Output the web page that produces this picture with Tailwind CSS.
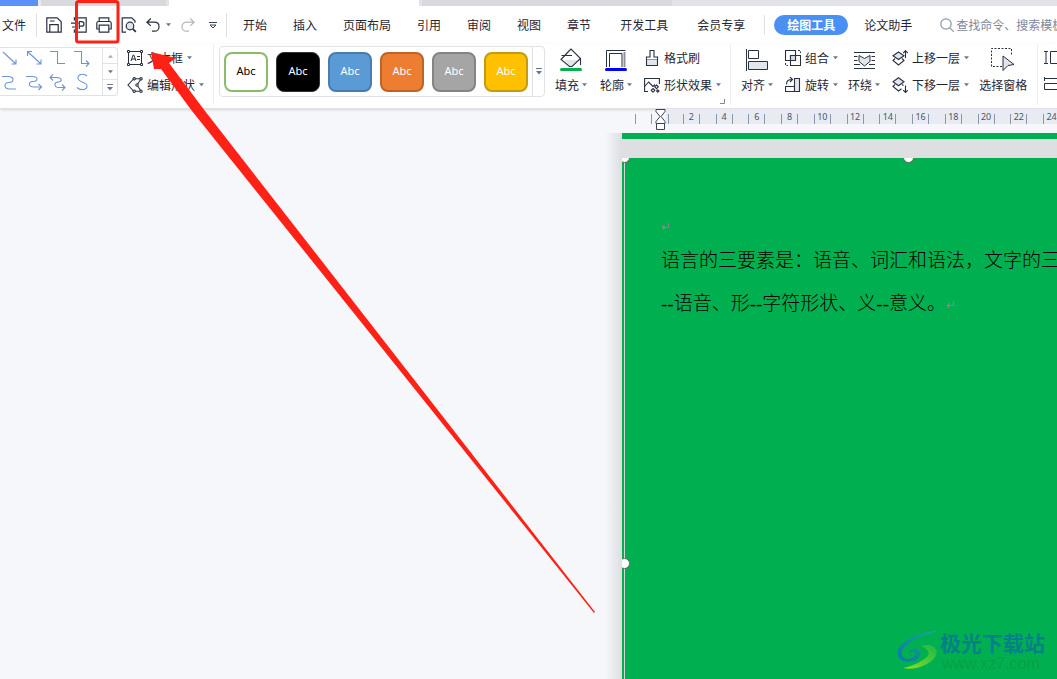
<!DOCTYPE html>
<html lang="zh-CN">
<head>
<meta charset="utf-8">
<title>绘图工具</title>
<script src="https://cdn.jsdelivr.net/npm/@tailwindcss/browser@4"></script>
</head>
<body class="relative flex h-screen flex-col overflow-hidden bg-[#f5f7fa] font-['Noto_Sans_CJK_SC',sans-serif] text-xs text-[#1f2633]">
<svg class="hidden">
  <symbol id="caret" viewBox="0 0 6 4"><path d="M0 0h6L3 3.5z" fill="#6b7890"/></symbol>
  <symbol id="more" viewBox="0 0 6 7"><path d="M0 .5h6" stroke="#6b7890"/><path d="M0 3h6L3 6.5z" fill="#6b7890"/></symbol>
</svg>

<!-- Document tabs -->
<div class="flex h-[6px] shrink-0 bg-white">
  <div class="w-[38px] bg-[#5b8ff9]"></div>
  <div class="w-[3px] bg-[#e8e9ec]"></div>
  <div class="w-[125px] bg-[#d8d9dd]"></div>
  <div class="w-[3px] bg-[#e2e3e7]"></div>
  <div class="w-[250px] bg-white"></div>
  <div class="w-[3px] bg-[#e2e3e7]"></div>
  <div class="w-[250px] bg-[#d8d9dd]"></div>
  <div class="flex-1 bg-[#e2e3e7]"></div>
</div>

<!-- Menu bar -->
<nav class="flex h-[38px] shrink-0 items-center overflow-hidden whitespace-nowrap bg-white">
  <button class="ml-[2px] shrink-0">文件</button>
  <span class="ml-[10px] h-6 w-px shrink-0 bg-[#dddfe4]"></span>
  <div class="ml-[9px] flex shrink-0 items-center gap-[9px]">
    <button aria-label="保存"><svg class="size-4" viewBox="0 0 16 16" fill="none" stroke="#283142" stroke-width="1.2"><path d="M.8 15.2V.8h10.4l4 4v10.4zM3.8 15V7.6h8.4V15M4 4h4.6"/></svg></button>
    <button aria-label="输出为PDF"><svg class="size-4" viewBox="0 0 16 16" fill="none" stroke="#283142" stroke-width="1.2"><path d="M3.4 3.4V.8h11.8v14.4H3.4v-2.600M0 6.200h6.600M4.400 3.900l2.400 2.300-2.400 2.300M1 10h5.200M8.300 12V4.600h2.200c3.300 0 3.300 4.600 0 4.600H8.300"/></svg></button>
    <button aria-label="打印"><svg class="size-4" viewBox="0 0 16 16" fill="none" stroke="#283142" stroke-width="1.2"><path d="M3.200 4.500V.8h9.600v3.700M3.200 12H.8V6.200q0-1.700 1.700-1.700h11q1.700 0 1.700 1.700V12h-2.400M3.200 8.200h9.600v7H3.200z"/></svg></button>
    <button aria-label="打印预览"><svg class="size-4" viewBox="0 0 16 16" fill="none" stroke="#283142" stroke-width="1.2"><path d="M5 15.200H1.200V.8h9.600l3.200 3.300v1.700"/><circle cx="9" cy="9" r="3.800" fill="#e2e5ea"/><path d="M11.800 11.800l3 3" stroke-width="1.800"/></svg></button>
  </div>
  <button aria-label="撤销" class="ml-[9px] shrink-0"><svg class="h-4 w-[14px]" viewBox="0 0 14 16" fill="none" stroke="#283142" stroke-width="1.200"><path d="M4.800 1.500L.9 5.200l3.900 3.700M1.200 5.200h7.300c6 0 6 9 0 9H6"/></svg></button>
  <svg class="ml-[6px] h-1 w-[5px] shrink-0"><use href="#caret"/></svg>
  <button aria-label="恢复" class="ml-[10px] shrink-0"><svg class="h-4 w-[14px]" viewBox="0 0 14 16" fill="none" stroke="#b3b7bf" stroke-width="1.200"><path d="M9.200 1.500l3.900 3.700-3.900 3.700M12.800 5.200H5.500c-6 0-6 9 0 9H8"/></svg></button>
  <button aria-label="自定义快速访问工具栏" class="ml-[14px] shrink-0"><svg class="h-[7px] w-[8px]" viewBox="0 0 8 7" fill="none" stroke="#3b4454"><path d="M0 .5h8M1 3h6L4 6z"/></svg></button>
  <span class="ml-[9px] h-6 w-px shrink-0 bg-[#dddfe4]"></span>
  <div class="ml-4 flex shrink-0 gap-[26px]">
    <button>开始</button><button>插入</button><button>页面布局</button><button>引用</button><button>审阅</button><button>视图</button><button>章节</button>
  </div>
  <div class="ml-[29px] flex shrink-0 gap-[29px]"><button>开发工具</button><button>会员专享</button></div>
  <span class="ml-[19px] h-5 w-px shrink-0 bg-[#dddfe4]"></span>
  <button class="ml-[9px] h-5 shrink-0 rounded-full bg-[#4a90f2] px-[13px] font-bold text-white">绘图工具</button>
  <button class="ml-4 shrink-0">论文助手</button>
  <label class="ml-[28px] flex min-w-0 flex-1 items-center gap-[2px]">
    <svg class="size-[14px] shrink-0" viewBox="0 0 14 14" fill="none" stroke="#8a96aa" stroke-width="1.200"><circle cx="6" cy="6" r="5.200"/><path d="M9.800 9.800l4 4"/></svg>
    <input aria-label="搜索" class="w-full min-w-0 outline-none placeholder:text-[#7d889c] placeholder:opacity-100" placeholder="查找命令、搜索模板">
  </label>
</nav>

<!-- Ribbon -->
<section class="flex h-[65px] shrink-0 overflow-hidden whitespace-nowrap border-b border-[#dfe1e5] bg-white shadow-sm">
  <div class="mt-[3px] flex h-[49px] w-[118px] shrink-0 rounded-r-sm border-y border-r border-[#e0e2e7]">
    <svg class="h-[47px] w-[102px]" viewBox="0 0 102 47" fill="none" stroke="#6f93d6" stroke-width="1.100">
      <path d="M3 4l13 12M16 11.500V16h-4.500M28 4l13 12M41 11.500V16h-4.500M27.500 8V3.500H32M50 3.500h7.500v12H65M74 3.500h7.500v12h7.500M86 12.500l3 3-3 3"/>
      <path d="M2 28.500h6c7 0 6 6 1 6s-6 6.500 1 6.500h6M26 28.500h6c7 0 6 5 1 5s-5 5.500 1 5.500h7M38.500 36l3 3-3 3M50.500 29.500h6c6 0 6 4.500 1.500 4.500s-4 5.500 1 5.500h6M53 26.500l-3 3 3 3M62 36.500l3 3-3 3M87 28c-3-3-10-2-9 2.500s9 3 9 7.500-7 4.500-10 1.500"/>
    </svg>
    <div class="flex flex-1 flex-col border-l border-[#e0e2e7]">
      <button aria-label="上一行" class="flex flex-1 items-center justify-center"><svg class="h-1 w-[5px] rotate-180 opacity-60"><use href="#caret"/></svg></button>
      <button aria-label="下一行" class="flex flex-1 items-center justify-center border-y border-[#e0e2e7]"><svg class="h-1 w-[5px]"><use href="#caret"/></svg></button>
      <button aria-label="更多线条" class="flex flex-1 items-center justify-center"><svg class="h-[7px] w-[6px]"><use href="#more"/></svg></button>
    </div>
  </div>
  <div class="ml-[9px] flex shrink-0 flex-col items-start">
    <button class="flex h-[27px] items-center"><svg class="mr-1 size-4" viewBox="0 0 16 16" fill="none" stroke="#283142"><path d="M1.500 1.500h13v13h-13zM4 11l2.200-6h.6L9 11M4.800 9h3.400M10 6.500h3M10 9.500h3"/><path d="M.5.500h2v2h-2zM13.500.500h2v2h-2zM.5 13.500h2v2h-2zM13.500 13.500h2v2h-2z" fill="#fff"/></svg>文本框<svg class="ml-[4px] h-1 w-[5px]"><use href="#caret"/></svg></button>
    <button class="flex h-[27px] items-center"><svg class="mr-1 size-4" viewBox="0 0 16 16" fill="none" stroke="#283142" stroke-width="1.100"><path d="M6.500 2L1 8l5.500 6M7 1.800L14 1.800M14 2l-4 6 4 6M14 14.200H7"/><circle cx="7.200" cy="1.800" r="1.200" fill="#fff"/><circle cx="14" cy="1.800" r="1.200" fill="#fff"/><circle cx="10" cy="8" r="1.200" fill="#fff"/><circle cx="14" cy="14.200" r="1.200" fill="#fff"/><circle cx="7.200" cy="14.200" r="1.200" fill="#fff"/></svg>编辑形状<svg class="ml-[4px] h-1 w-[5px]"><use href="#caret"/></svg></button>
  </div>
  <span class="ml-[9px] h-[61px] w-px shrink-0 bg-[#eceef1]"></span>
  <div class="ml-[5px] mt-[2px] flex h-[51px] shrink-0 items-center rounded-sm border border-[#e0e2e7] font-['Noto_Sans',sans-serif] text-[11px] text-white">
    <div class="flex gap-2 px-1">
      <button class="h-10 w-11 rounded-lg border-2 border-[#8abb6b] bg-white text-black">Abc</button>
      <button class="h-10 w-11 rounded-lg border border-[#333] bg-black">Abc</button>
      <button class="h-10 w-11 rounded-lg border-2 border-[#4a7cae] bg-[#5b9bd5]">Abc</button>
      <button class="h-10 w-11 rounded-lg border-2 border-[#bd6427] bg-[#ed7d31]">Abc</button>
      <button class="h-10 w-11 rounded-lg border-2 border-[#848484] bg-[#a5a5a5]">Abc</button>
      <button class="h-10 w-11 rounded-lg border-2 border-[#c29a14] bg-[#ffc000]">Abc</button>
    </div>
    <button aria-label="更多样式" class="flex h-full w-3 items-center justify-center border-l border-[#e0e2e7]"><svg class="h-[7px] w-[6px]"><use href="#more"/></svg></button>
  </div>
  <button class="ml-[10px] flex shrink-0 flex-col items-center">
    <span class="flex h-[27px] items-end"><svg class="h-[23px] w-[22px]" viewBox="0 0 22 23" fill="none" stroke="#283142" stroke-width="1.100"><path d="M4 12h14l-7 7z" fill="#e2e5ea" stroke="none"/><path d="M9 3l2-2 9.500 9.500L12 18.500H9.500L1 11.500 9 3M1.500 7.500H12M20.500 10v7"/><path d="M1.500 21.500h19" stroke="#00b050" stroke-width="3" stroke-linecap="round"/></svg></span>
    <span class="flex h-[27px] items-center">填充<svg class="ml-[3px] h-1 w-[5px]"><use href="#caret"/></svg></span>
  </button>
  <button class="ml-[13px] flex shrink-0 flex-col items-center">
    <span class="flex h-[27px] items-end"><svg class="h-[23px] w-[22px]" viewBox="0 0 22 23" fill="none" stroke="#283142"><path d="M1.500 19V2.500h19M4.500 19V5.500H17V19"/><path d="M19.500 4v15" stroke="#8d939e" stroke-width="2"/><path d="M1.500 21.500h19" stroke="#00f" stroke-width="3" stroke-linecap="round"/></svg></span>
    <span class="flex h-[27px] items-center">轮廓<svg class="ml-[3px] h-1 w-[5px]"><use href="#caret"/></svg></span>
  </button>
  <div class="ml-[12px] flex shrink-0 flex-col items-start">
    <button class="flex h-[27px] items-center"><svg class="mr-1 size-4" viewBox="0 0 16 16" fill="none" stroke="#283142" stroke-width="1.100"><path d="M2.500 9.500h11v6h-11z" fill="#e2e5ea"/><path d="M2.500 9.500V7H6V.5h4V7h3.500v2.500" fill="#fff"/></svg>格式刷</button>
    <button class="flex h-[27px] items-center"><svg class="mr-1 size-4" viewBox="0 0 16 16" fill="none" stroke="#283142" stroke-width="1.100"><path d="M4 14.500H.6V1.500h14.800V7M.6 9.500l4-4.500L9 9.500l2-2"/><path d="M12.500 8l1.800 1.800-1.800 1.800-1.800-1.800zM9 11.500l1.800 1.800L9 15.100l-1.800-1.800zM13.800 12.800l1.200 1.200-1.200 1.200-1.200-1.200z" fill="#fff"/></svg>形状效果<svg class="ml-[4px] h-1 w-[5px]"><use href="#caret"/></svg></button>
  </div>
  <button aria-label="形状样式设置" class="ml-[-1px] mb-1 shrink-0 self-end"><svg class="size-[5px]" viewBox="0 0 5 5" fill="none" stroke="#7d889c"><path d="M4.500 0v4.500H0"/></svg></button>
  <span class="ml-[5px] h-[61px] w-px shrink-0 bg-[#eceef1]"></span>
  <button class="ml-[10px] flex shrink-0 flex-col items-center">
    <span class="flex h-[27px] items-end"><svg class="h-[22px] w-[22px]" viewBox="0 0 22 22" fill="none" stroke="#283142"><path d="M.5 0v22M2.500 1.500h10v8h-10z"/><path d="M2.500 12.500h19v8h-19z" fill="#e2e5ea"/></svg></span>
    <span class="flex h-[27px] items-center">对齐<svg class="ml-[3px] h-1 w-[5px]"><use href="#caret"/></svg></span>
  </button>
  <div class="ml-[12px] flex shrink-0 flex-col items-start">
    <button class="flex h-[27px] items-center"><svg class="mr-1 size-4" viewBox="0 0 16 16" fill="none" stroke="#283142" stroke-width="1.100"><path d="M5.500 5.500h10v10h-10z"/><path d="M.5.500h10v10H.5z"/><path d="M5.500 5.500h5v5h-5z" fill="#d5d9e0"/><path d="M13 .5h2.500V3M.5 13v2.500H3" stroke-dasharray="2 1.500"/></svg>组合<svg class="ml-[4px] h-1 w-[5px]"><use href="#caret"/></svg></button>
    <button class="flex h-[27px] items-center"><svg class="mr-1 size-4" viewBox="0 0 16 16" fill="none" stroke="#283142" stroke-width="1.100"><path d="M.5 9.500h9v5h-9z"/><path d="M9.500 1.500h5v13h-5z" fill="#e2e5ea"/><path d="M1.500 7.500c0-4 2-5 6-5M5 0l2.500 2.500L5 5"/></svg>旋转<svg class="ml-[4px] h-1 w-[5px]"><use href="#caret"/></svg></button>
  </div>
  <button class="ml-[10px] flex shrink-0 flex-col items-center">
    <span class="flex h-[27px] items-end"><svg class="h-[20px] w-[22px]" viewBox="0 0 22 20" fill="none" stroke="#283142"><path d="M1 1.500h21M1 5.500h3.500M18.500 5.500H22M1 9.500h3.500M18.500 9.500H22M1 13.500h6M16 13.500h6M1 17.500h21"/><path d="M6 4.500l5.500 3 5.500-3v6l-5.500 4.500L6 10.500z" fill="#e2e5ea"/></svg></span>
    <span class="flex h-[27px] items-center">环绕<svg class="ml-[3px] h-1 w-[5px]"><use href="#caret"/></svg></span>
  </button>
  <div class="ml-[12px] flex shrink-0 flex-col items-start">
    <button class="flex h-[27px] items-center"><svg class="mr-1 size-4" viewBox="0 0 16 16" fill="none" stroke="#283142" stroke-width="1.100"><path d="M6.500 2L12 5.700 6.500 9.500 1 5.700z" fill="#e2e5ea"/><path d="M3 8.500l-2 2L6.500 15l5.500-4.500-2-2M13.500 8V1M11.200 3l2.300-2.300L15.800 3"/></svg>上移一层<svg class="ml-[4px] h-1 w-[5px]"><use href="#caret"/></svg></button>
    <button class="flex h-[27px] items-center"><svg class="mr-1 size-4" viewBox="0 0 16 16" fill="none" stroke="#283142" stroke-width="1.100"><path d="M6.500.7L12 4.700 6.500 8.700 1 4.700z" fill="#e2e5ea"/><path d="M3 7.500l-2 2L6.500 14l3-2.200M10 7.500l1.500 1M13.500 8.500v7M11.200 13.200l2.300 2.300 2.300-2.300"/></svg>下移一层<svg class="ml-[4px] h-1 w-[5px]"><use href="#caret"/></svg></button>
  </div>
  <button class="ml-[10px] flex shrink-0 flex-col items-center">
    <span class="flex h-[27px] items-end"><svg class="h-[23px] w-[24px]" viewBox="0 0 24 23" fill="none" stroke="#283142"><path d="M11 18.500H.5V.5h20V8" stroke-dasharray="2 1.500"/><path d="M12 8l11 8.500-6 1-5 5z" fill="#e2e5ea"/></svg></span>
    <span class="flex h-[27px] items-center">选择窗格</span>
  </button>
  <span class="ml-[10px] h-[61px] w-px shrink-0 bg-[#eceef1]"></span>
  <div class="ml-[6px] flex shrink-0 flex-col">
    <span class="flex h-[27px] items-center"><svg class="size-4" viewBox="0 0 16 16" fill="none" stroke="#283142"><path d="M0 1.500h4M2 1.500v12M0 13.500h4M6.500 1.500h9v12h-9z"/></svg></span>
    <span class="flex h-[27px] items-center"><svg class="size-4" viewBox="0 0 16 16" fill="none" stroke="#283142"><path d="M.5 0v4M.5 1.500h15M.5 6.500h15v6H.5z"/></svg></span>
  </div>
</section>

<!-- Horizontal ruler -->
<div class="flex h-6 shrink-0 items-start overflow-hidden">
  <div class="ml-[635px] mt-[5px] h-[10px] w-[17px] shrink-0 border-x border-[#8a96aa]"></div>
  <svg class="ml-[3px] h-[22px] w-[11px] shrink-0" viewBox="0 0 11 22" fill="#fff" stroke="#3b4454"><path d="M1 .5h9v2L6 7.500l4 5v2H1v-2l4-5-4-5z"/><path d="M1.500 14.500h8v6h-8z"/></svg>
  <div class="flex h-[15px] flex-1 bg-[#e8ebf1] pl-[2px] pt-[5px]">
    <div class="h-[10px] w-[7px] shrink-0 border-l border-[#8a96aa]"></div>
    <div class="grid w-[393px] shrink-0 grid-cols-12 justify-items-center font-['Noto_Sans',sans-serif] text-[9px] leading-[5px] text-[#4a5568]">
      <span class="flex h-[10px] w-[17px] justify-center border-x border-[#8a96aa]">2</span>
      <span class="flex h-[10px] w-[17px] justify-center border-x border-[#8a96aa]">4</span>
      <span class="flex h-[10px] w-[17px] justify-center border-x border-[#8a96aa]">6</span>
      <span class="flex h-[10px] w-[17px] justify-center border-x border-[#8a96aa]">8</span>
      <span class="flex h-[10px] w-[17px] justify-center border-x border-[#8a96aa]">10</span>
      <span class="flex h-[10px] w-[17px] justify-center border-x border-[#8a96aa]">12</span>
      <span class="flex h-[10px] w-[17px] justify-center border-x border-[#8a96aa]">14</span>
      <span class="flex h-[10px] w-[17px] justify-center border-x border-[#8a96aa]">16</span>
      <span class="flex h-[10px] w-[17px] justify-center border-x border-[#8a96aa]">18</span>
      <span class="flex h-[10px] w-[17px] justify-center border-x border-[#8a96aa]">20</span>
      <span class="flex h-[10px] w-[17px] justify-center border-x border-[#8a96aa]">22</span>
      <span class="flex h-[10px] w-[17px] justify-center border-x border-[#8a96aa]">24</span>
    </div>
  </div>
</div>

<!-- Document canvas -->
<main class="flex min-h-0 flex-1">
  <div class="w-[622px] shrink-0 bg-linear-to-r from-[#f5f7fa] from-[605px] to-[#dcdee1] to-[622px]"></div>
  <div class="flex min-w-0 flex-1 flex-col bg-[#00b050]">
    <div class="h-[6px] shrink-0"></div>
    <div class="h-[19px] shrink-0 bg-[#dddfe0]"></div>
    <article class="relative flex-1 overflow-hidden pl-[39px] pt-[58px]">
      <div class="absolute inset-y-0 left-[2px] w-px bg-[#d5d5d5]"></div>
      <span class="absolute left-[-3px] top-[-6px] size-[11px] rounded-full border border-[#666] bg-white"></span>
      <span class="absolute left-[281px] top-[-6px] size-[11px] rounded-full border border-[#666] bg-white"></span>
      <span class="absolute left-[-3px] top-[400px] size-[11px] rounded-full border border-[#666] bg-white"></span>
      <div class="whitespace-nowrap font-['Liberation_Serif','Noto_Sans_CJK_SC',serif] text-[19px] font-light leading-[43px] text-black">
        <p class="flex h-[23px] items-center pb-1"><svg class="size-2" viewBox="0 0 8 8" fill="none" stroke="#8b8589"><path d="M7.500 1v4.500H1"/><path d="M3.500 2.500v6L.5 5.500z" fill="#8b8589" stroke="none"/></svg></p>
        <p>语言的三要素是：语音、词汇和语法，文字的三</p>
        <p class="flex items-center">--语音、形--字符形状、义--意义。<svg class="size-2" viewBox="0 0 8 8" fill="none" stroke="#8b8589"><path d="M7.500 1v4.500H1"/><path d="M3.500 2.500v6L.5 5.500z" fill="#8b8589" stroke="none"/></svg></p>
      </div>
      <div class="absolute bottom-[5px] left-[275px] flex items-start whitespace-nowrap">
        <svg class="h-[40px] w-[43px]" viewBox="0 0 44 42" fill="none">
          <defs><linearGradient id="blue" x1="0" y1="1" x2="1" y2="0"><stop stop-color="#087aa5"/><stop offset="1" stop-color="#16a99a"/></linearGradient><linearGradient id="lime" x1="0" y1="1" x2="1" y2="0"><stop stop-color="#8fdc22"/><stop offset="1" stop-color="#18b84a"/></linearGradient></defs>
          <path d="M43 1C24 1 0 12 0 24c0 7 6 10 14 9 8 0 12-8 8-12-4-3-11 0-10 4 2-3 7-3 7 0 0 5-11 8-14 2C1 19 17 7 43 1z" fill="url(#blue)"/>
          <path d="M25 17c8-3 16 0 16 6C41 34 20 43 6 40c9-2 20-7 25-12 4-4 0-9-6-11z" fill="url(#lime)"/>
        </svg>
        <div class="flex flex-col">
          <span class="text-[21px] font-bold leading-6 text-[#047f8c]">极光下载站</span>
          <span class="pl-[2px] font-['Liberation_Sans',sans-serif] text-[16px] leading-5 text-[#08a044]">www.xz7.com</span>
        </div>
      </div>
    </article>
  </div>
</main>

<!-- Annotation: highlighted print button and pointer -->
<svg class="pointer-events-none absolute left-0 top-0 h-[679px] w-[1057px]" viewBox="0 0 1057 679">
  <rect x="76.500" y="1.500" width="41.500" height="40.500" rx="2" fill="none" stroke="#ff2115" stroke-width="3"/>
  <path d="M151 52L176 58 169 63 205 111 595 612 594 613 192 111 161 69 154 69z" fill="#ff2115"/>
</svg>
</body>
</html>
